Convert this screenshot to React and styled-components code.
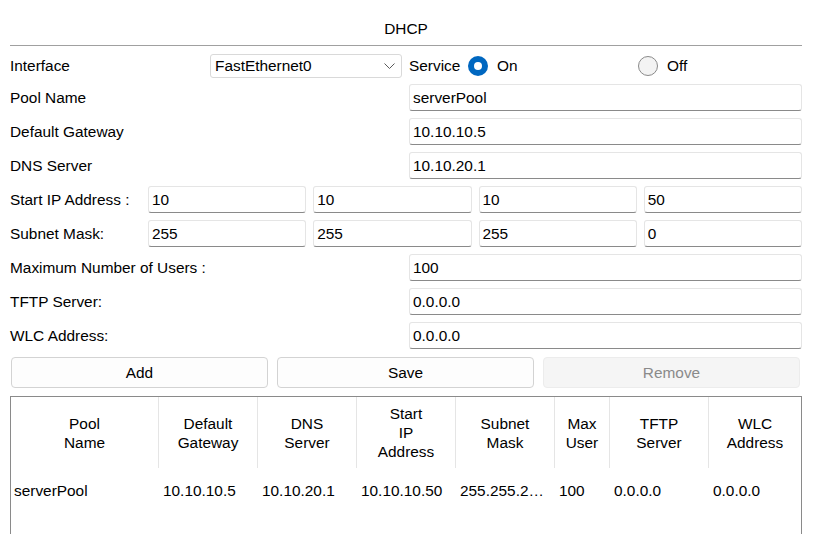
import React from "react";
import styled, { createGlobalStyle } from "styled-components";

const Global = createGlobalStyle`
  html, body { margin: 0; padding: 0; background: #fff; overflow: hidden; }
  body { font-family: "Liberation Sans", Arial, sans-serif; font-size: 15.4px; color: #000; }
  * { box-sizing: border-box; }
`;

const Page = styled.div`
  width: 813px;
  padding: 0 11px 0 10px;
  display: flex;
  flex-direction: column;
  & > * { flex-shrink: 0; }
`;

const Title = styled.div`
  padding-top: 18px;
  height: 46px;
  line-height: 22px;
  text-align: center;
  border-bottom: 1px solid #a0a0a0;
`;

const InterfaceRow = styled.div`
  margin-top: 8px;
  height: 24px;
  display: grid;
  grid-template-columns: 200px 192px 66px 170px 1fr;
  align-items: center;
`;

const Label = styled.div`
  line-height: 18px;
  white-space: nowrap;
`;

const SelectBox = styled.div`
  height: 24px;
  border: 1px solid #d9d9d9;
  border-radius: 3px;
  display: flex;
  align-items: center;
  justify-content: space-between;
  padding: 0 6px 0 4px;
  background: #fff;
`;

const ServiceLabel = styled.div`
  padding-left: 7px;
  white-space: nowrap;
`;

const RadioItem = styled.label`
  display: flex;
  align-items: center;
  gap: 9px;
`;

const RadioCircle = styled.span`
  width: 20px;
  height: 20px;
  border-radius: 50%;
  display: inline-flex;
  align-items: center;
  justify-content: center;
  flex-shrink: 0;
  background: ${(p) => (p.$on ? "#0067c0" : "#f3f3f3")};
  border: ${(p) => (p.$on ? "none" : "1px solid #8a8a8a")};
  &::after {
    content: "";
    display: ${(p) => (p.$on ? "block" : "none")};
    width: 8px;
    height: 8px;
    border-radius: 50%;
    background: #fff;
  }
`;

const Form = styled.div`
  margin-top: 6px;
  display: flex;
  flex-direction: column;
  gap: 7px;
`;

const FieldRow = styled.div`
  display: grid;
  grid-template-columns: ${(p) => (p.$quad ? "131px repeat(4, 1fr)" : "399px 1fr")};
  column-gap: ${(p) => (p.$quad ? "7px" : "0")};
  align-items: center;
  height: 27px;
`;

const Input = styled.div`
  height: 27px;
  border: 1px solid #e5e5e5;
  border-bottom: 1px solid #8a8a8a;
  border-radius: 3px;
  padding: 0 3px;
  line-height: 25px;
  background: #fff;
  white-space: nowrap;
  overflow: hidden;
`;

const Buttons = styled.div`
  margin-top: 8px;
  padding: 0 2px 0 1px;
  display: grid;
  grid-template-columns: repeat(3, 1fr);
  column-gap: 9px;
`;

const Button = styled.div`
  height: 31px;
  border-radius: 4px;
  border: 1px solid ${(p) => (p.$disabled ? "#ececec" : "#d3d3d3")};
  background: ${(p) => (p.$disabled ? "#f5f5f5" : "#fdfdfd")};
  color: ${(p) => (p.$disabled ? "#8a8a8a" : "#000")};
  display: flex;
  align-items: center;
  justify-content: center;
`;

const Table = styled.div`
  margin-top: 8px;
  border: 1px solid #8a8a8a;
  border-bottom: none;
  height: 138px;
  overflow: hidden;
`;

const cols = "147px 99px 99px 99px 99px 55px 99px 1fr";

const HeadRow = styled.div`
  display: grid;
  grid-template-columns: ${cols};
  height: 71px;
`;

const HeadCell = styled.div`
  display: flex;
  align-items: center;
  justify-content: center;
  text-align: center;
  line-height: 19px;
  border-left: ${(p) => (p.$first ? "none" : "1px solid #e5e5e5")};
  padding: 0 2px;
`;

const DataRow = styled.div`
  display: grid;
  grid-template-columns: ${cols};
  height: 45px;
  align-items: center;
`;

const DataCell = styled.div`
  padding-left: ${(p) => (p.$first ? "3px" : "5px")};
  padding-right: 2px;
  white-space: nowrap;
  overflow: hidden;
  text-overflow: ellipsis;
`;

const Chevron = () => (
  <svg width="11" height="7" viewBox="0 0 11 7">
    <polyline points="0.5,0.5 5.5,5.5 10.5,0.5" fill="none" stroke="#5a5a5a" strokeWidth="1" />
  </svg>
);

const headers = [
  ["Pool", "Name"],
  ["Default", "Gateway"],
  ["DNS", "Server"],
  ["Start", "IP", "Address"],
  ["Subnet", "Mask"],
  ["Max", "User"],
  ["TFTP", "Server"],
  ["WLC", "Address"],
];

const row = ["serverPool", "10.10.10.5", "10.10.20.1", "10.10.10.50", "255.255.255.0", "100", "0.0.0.0", "0.0.0.0"];

export default function App() {
  return (
    <>
      <Global />
      <Page>
        <Title>DHCP</Title>
        <InterfaceRow>
          <Label>Interface</Label>
          <SelectBox>
            <span>FastEthernet0</span>
            <Chevron />
          </SelectBox>
          <ServiceLabel>Service</ServiceLabel>
          <RadioItem>
            <RadioCircle $on />
            <span>On</span>
          </RadioItem>
          <RadioItem>
            <RadioCircle />
            <span>Off</span>
          </RadioItem>
        </InterfaceRow>
        <Form>
          <FieldRow>
            <Label>Pool Name</Label>
            <Input>serverPool</Input>
          </FieldRow>
          <FieldRow>
            <Label>Default Gateway</Label>
            <Input>10.10.10.5</Input>
          </FieldRow>
          <FieldRow>
            <Label>DNS Server</Label>
            <Input>10.10.20.1</Input>
          </FieldRow>
          <FieldRow $quad>
            <Label>Start IP Address :</Label>
            <Input>10</Input>
            <Input>10</Input>
            <Input>10</Input>
            <Input>50</Input>
          </FieldRow>
          <FieldRow $quad>
            <Label>Subnet Mask:</Label>
            <Input>255</Input>
            <Input>255</Input>
            <Input>255</Input>
            <Input>0</Input>
          </FieldRow>
          <FieldRow>
            <Label>Maximum Number of Users :</Label>
            <Input>100</Input>
          </FieldRow>
          <FieldRow>
            <Label>TFTP Server:</Label>
            <Input>0.0.0.0</Input>
          </FieldRow>
          <FieldRow>
            <Label>WLC Address:</Label>
            <Input>0.0.0.0</Input>
          </FieldRow>
        </Form>
        <Buttons>
          <Button>Add</Button>
          <Button>Save</Button>
          <Button $disabled>Remove</Button>
        </Buttons>
        <Table>
          <HeadRow>
            {headers.map((h, i) => (
              <HeadCell key={i} $first={i === 0}>
                <div>
                  {h.map((l, j) => (
                    <div key={j}>{l}</div>
                  ))}
                </div>
              </HeadCell>
            ))}
          </HeadRow>
          <DataRow>
            {row.map((v, i) => (
              <DataCell key={i} $first={i === 0}>
                {v}
              </DataCell>
            ))}
          </DataRow>
        </Table>
      </Page>
    </>
  );
}
